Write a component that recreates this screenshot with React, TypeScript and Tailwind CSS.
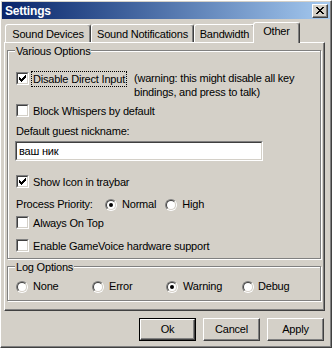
import React from 'react';

const face = 'bg-[#d4d0c8]';
const raised =
  'border border-t-white border-l-white border-r-[#404040] border-b-[#404040] shadow-[inset_-1px_-1px_0_#808080]';
const sunkenOuter = 'border border-t-[#808080] border-l-[#808080] border-r-white border-b-white';
const sunkenInner = 'border border-t-[#404040] border-l-[#404040] border-r-[#d4d0c8] border-b-[#d4d0c8]';

function CheckMark() {
  return (
    <svg width="7" height="7" viewBox="0 0 7 7" shapeRendering="crispEdges">
      <path
        d="M0 2h1v3H0z M1 3h1v3H1z M2 4h1v3H2z M3 3h1v3H3z M4 2h1v3H4z M5 1h1v3H5z M6 0h1v3H6z"
        fill="#000"
      />
    </svg>
  );
}

function Checkbox({ checked, label, focus }: { checked?: boolean; label: string; focus?: boolean }) {
  return (
    <div className="flex items-center h-[13px]">
      <div className={`w-[13px] h-[13px] shrink-0 ${sunkenOuter}`}>
        <div className={`w-[11px] h-[11px] bg-white flex items-center justify-center ${sunkenInner}`}>
          {checked && <CheckMark />}
        </div>
      </div>
      <span
        className={`ml-[2px] px-[1px] leading-[14px] border ${
          focus ? 'border-dotted border-black' : 'border-transparent'
        }`}
      >
        {label}
      </span>
    </div>
  );
}

function Radio({ checked }: { checked?: boolean }) {
  return (
    <div className="w-[12px] h-[12px] shrink-0 rounded-full border border-t-[#808080] border-l-[#808080] border-r-white border-b-white">
      <div className="w-[10px] h-[10px] rounded-full bg-white border border-t-[#404040] border-l-[#404040] border-r-[#d4d0c8] border-b-[#d4d0c8] flex items-center justify-center">
        {checked && <div className="w-[4px] h-[4px] rounded-full bg-black" />}
      </div>
    </div>
  );
}

function RadioLabel({ checked, label, gap = 'ml-[5px]' }: { checked?: boolean; label: string; gap?: string }) {
  return (
    <div className="flex items-center h-[13px]">
      <Radio checked={checked} />
      <span className={`${gap} leading-[13px]`}>{label}</span>
    </div>
  );
}

function Tab({ label, width, selected }: { label: string; width: string; selected?: boolean }) {
  if (selected) {
    return (
      <div
        className={`${width} h-[21px] -mb-[1px] -ml-[2px] relative z-10 ${face} rounded-t-[3px] border-t border-l border-white border-r border-r-[#404040] shadow-[inset_-1px_0_0_#808080] text-center leading-[13px] pt-[2px]`}
      >
        {label}
      </div>
    );
  }
  return (
    <div
      className={`${width} h-[18px] ${face} rounded-t-[3px] border-t border-l border-white border-r border-r-[#404040] shadow-[inset_-1px_0_0_#808080] text-center leading-[13px] pt-[3px]`}
    >
      {label}
    </div>
  );
}

function Button({ label, isDefault }: { label: string; isDefault?: boolean }) {
  if (isDefault) {
    return (
      <div className="w-[57px] h-[23px] border border-black">
        <div className={`w-full h-full ${raised} flex items-center justify-center leading-[13px]`}>{label}</div>
      </div>
    );
  }
  return (
    <div className={`w-[57px] h-[23px] ${raised} flex items-center justify-center leading-[13px]`}>{label}</div>
  );
}

export default function App() {
  return (
    <div
      className={`w-[332px] h-[348px] ${face} border border-t-white border-l-white border-r-[#404040] border-b-[#404040] shadow-[inset_-1px_-1px_0_#808080] text-[11px] tracking-[-0.2px] text-black font-['Liberation_Sans',Arial,sans-serif] flex flex-col`}
    >
      {/* title bar */}
      <div className="mx-[1px] mt-[1px] h-[17px] flex items-center justify-between bg-gradient-to-r from-[#0a246a] to-[#a6caf0]">
        <span className="pl-[3px] text-white text-[12px] font-bold leading-[14px]">Settings</span>
        <div className={`mr-[2px] w-[16px] h-[14px] ${raised} ${face} flex items-center justify-center`}>
          <svg width="8" height="7" viewBox="0 0 8 7" shapeRendering="crispEdges">
            <path
              d="M0 0h2v1H0z M6 0h2v1H6z M1 1h2v1H1z M5 1h2v1H5z M2 2h4v1H2z M3 3h2v1H3z M2 4h4v1H2z M1 5h2v1H1z M5 5h2v1H5z M0 6h2v1H0z M6 6h2v1H6z"
              fill="#000"
            />
          </svg>
        </div>
      </div>

      {/* tabs */}
      <div className="h-[23px] ml-[4px] flex items-end">
        <Tab label="Sound Devices" width="w-[86px]" />
        <Tab label="Sound Notifications" width="w-[103px]" />
        <Tab label="Bandwidth" width="w-[61px]" />
        <Tab label="Other" width="w-[47px]" selected />
      </div>

      {/* panel */}
      <div className="ml-[3px] w-[321px] h-[269px] border-t border-l border-white border-r border-b border-r-[#404040] border-b-[#404040] shadow-[inset_-1px_-1px_0_#808080] pl-[2px] pt-[7px]">
        {/* Various Options */}
        <div className="w-[314px] border border-[#808080] shadow-[inset_1px_1px_0_#fff,1px_1px_0_#fff] pl-[8px] pb-[6px] flex flex-col">
          <div className={`-mt-[6px] -ml-[1px] w-fit px-[1px] leading-[13px] ${face}`}>Various Options</div>

          <div className="mt-[14px] flex items-start">
            <Checkbox checked focus label="Disable Direct Input" />
            <div className="ml-[7px] leading-[14px] -mt-[1px]">
              (warning: this might disable all key
              <br />
              bindings, and press to talk)
            </div>
          </div>

          <div className="mt-[5px]">
            <Checkbox label="Block Whispers by default" />
          </div>

          <div className="mt-[8px] leading-[13px]">Default guest nickname:</div>

          <div className={`mt-[3px] -ml-[1px] w-[248px] h-[20px] ${sunkenOuter}`}>
            <div className={`w-full h-full bg-white ${sunkenInner} pl-[2px] leading-[16px]`}>ваш ник</div>
          </div>

          <div className="mt-[14px]">
            <Checkbox checked label="Show Icon in traybar" />
          </div>

          <div className="mt-[10px] flex items-center h-[13px]">
            <span className="w-[89px] leading-[13px]">Process Priority:</span>
            <RadioLabel checked label="Normal" />
            <div className="ml-[9px]">
              <RadioLabel label="High" />
            </div>
          </div>

          <div className="mt-[5px]">
            <Checkbox label="Always On Top" />
          </div>

          <div className="mt-[10px]">
            <Checkbox label="Enable GameVoice hardware support" />
          </div>
        </div>

        {/* Log Options */}
        <div className="mt-[7px] w-[314px] border border-[#808080] shadow-[inset_1px_1px_0_#fff,1px_1px_0_#fff] pl-[8px] pb-[7px] flex flex-col">
          <div className={`-mt-[6px] -ml-[1px] w-fit px-[1px] leading-[13px] ${face}`}>Log Options</div>
          <div className="mt-[6px] flex items-center">
            <div className="w-[76px]">
              <RadioLabel label="None" />
            </div>
            <div className="w-[74px]">
              <RadioLabel label="Error" />
            </div>
            <div className="w-[76px]">
              <RadioLabel checked label="Warning" />
            </div>
            <RadioLabel label="Debug" gap="ml-[4px]" />
          </div>
        </div>
      </div>

      {/* buttons */}
      <div className="mt-[7px] ml-[138px] flex gap-[7px]">
        <Button label="Ok" isDefault />
        <Button label="Cancel" />
        <Button label="Apply" />
      </div>
    </div>
  );
}
